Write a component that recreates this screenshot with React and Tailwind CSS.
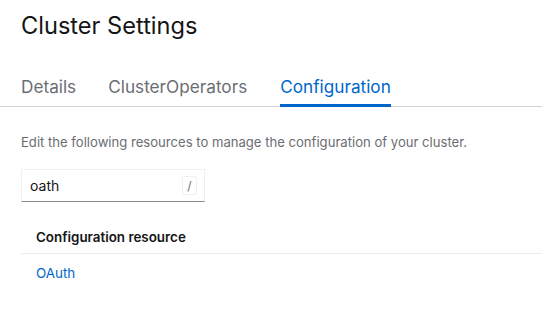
export default function App() {
  return (
    <div className="w-[542px] h-[312px] bg-white overflow-hidden" style={{ fontFamily: 'Inter, "Noto Sans", sans-serif' }}>
      <h1 className="pl-[21px] pt-[12px] text-[23.6px] leading-[28px] text-[#151515] font-normal">Cluster Settings</h1>
      <div className="mt-[38px] flex border-b border-[#d2d2d2] h-[29px] pl-[21px]">
        <div className="text-[17.2px] text-[#6a6e73] leading-[17px] mr-[32px]">Details</div>
        <div className="text-[17.2px] text-[#6a6e73] leading-[17px] mr-[33px]">ClusterOperators</div>
        <div className="relative text-[17.2px] text-[#0066cc] leading-[17px] h-full">
          Configuration
          <div className="absolute left-0 right-0 bottom-[-1px] h-[3px] bg-[#0066cc]"></div>
        </div>
      </div>
      <p className="pl-[21px] mt-[26px] text-[13.1px] leading-[18px] text-[#6a6e73]">
        Edit the following resources to manage the configuration of your cluster.
      </p>
      <div className="ml-[21px] mt-[18px] w-[184px] h-[33px] border border-[#f0f0f0] border-b-[#8a8d90] flex items-center justify-between pl-[8px] pr-[7px]">
        <span className="text-[14px] text-[#151515]">oath</span>
        <span className="w-[15px] h-[19px] border border-[#f0f0f0] rounded-[3px] flex items-center justify-center text-[12px] text-[#6a6e73]">/</span>
      </div>
      <div className="ml-[21px] mt-[19px] border-b border-[#ededed] h-[33px] flex items-center pl-[15px]">
        <span className="text-[13.4px] font-semibold text-[#151515]">Configuration resource</span>
      </div>
      <div className="ml-[21px] h-[38px] flex items-center pl-[15px]">
        <span className="text-[13.4px] text-[#0066cc]">OAuth</span>
      </div>
    </div>
  );
}
